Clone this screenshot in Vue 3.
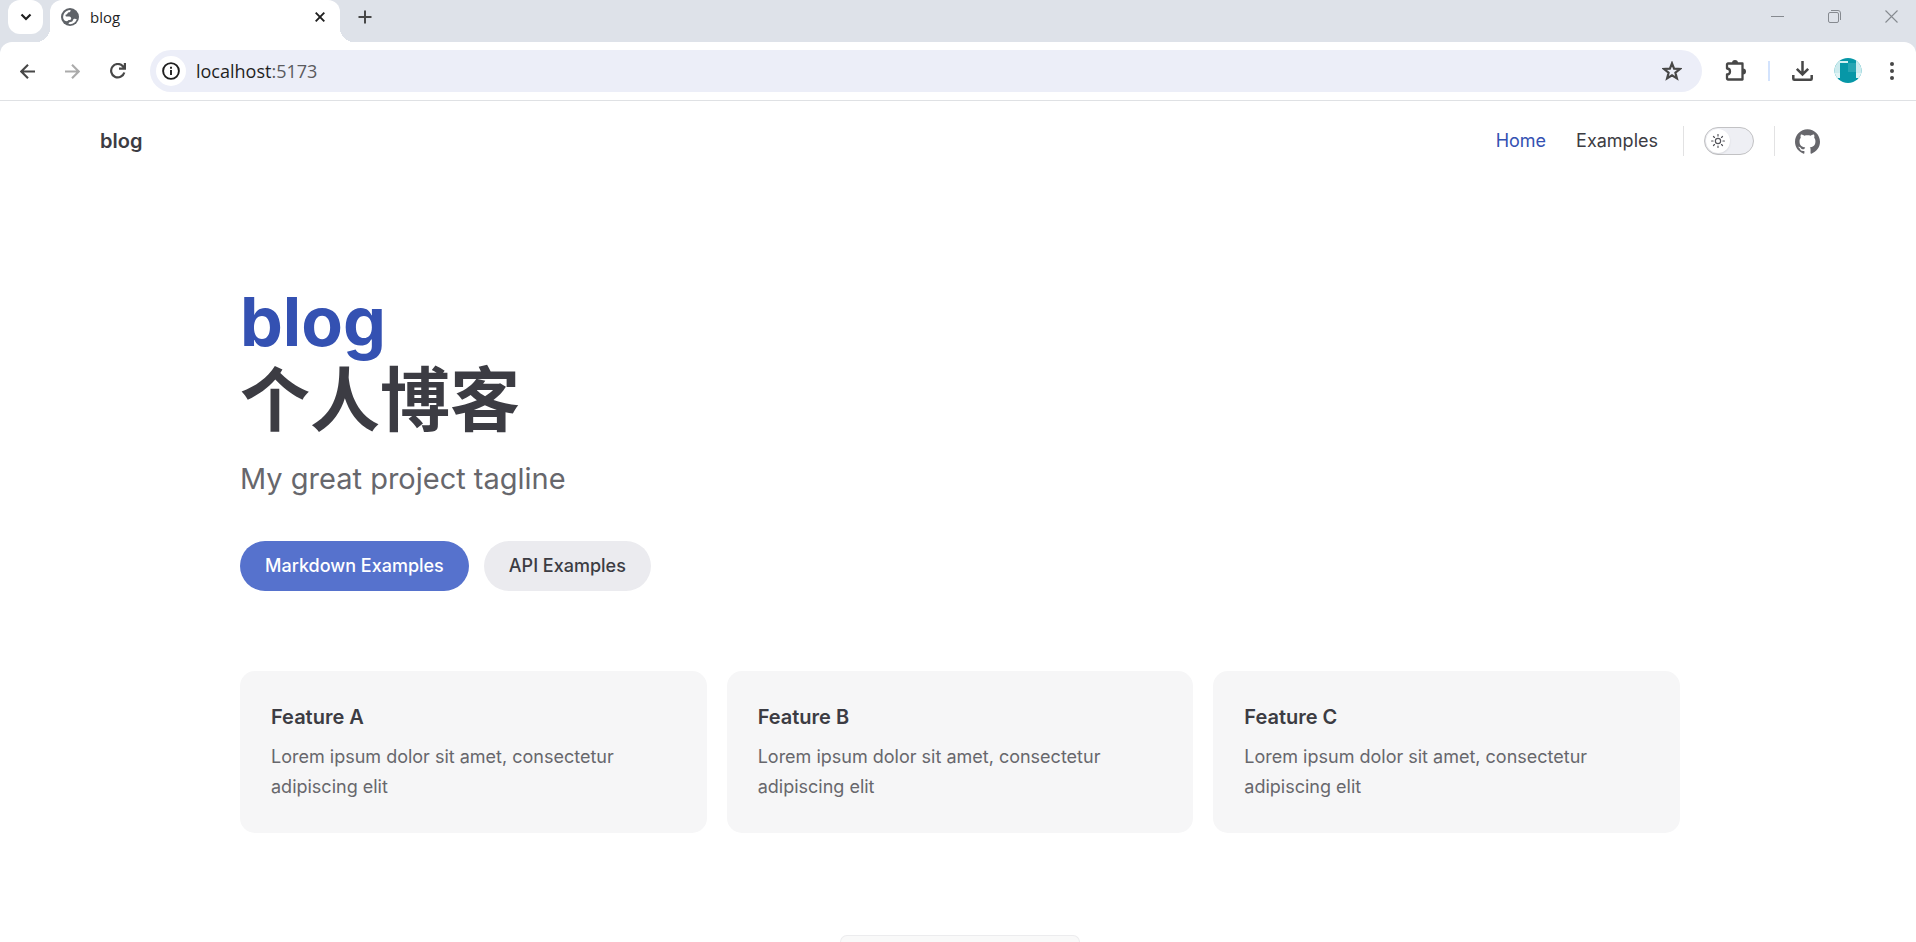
<script setup>
import { ref } from 'vue'

const address = ref('localhost:5173')
const dark = ref(false)
const features = [
  { title: 'Feature A', details: 'Lorem ipsum dolor sit amet, consectetur adipiscing elit' },
  { title: 'Feature B', details: 'Lorem ipsum dolor sit amet, consectetur adipiscing elit' },
  { title: 'Feature C', details: 'Lorem ipsum dolor sit amet, consectetur adipiscing elit' }
]
const rays = [0, 45, 90, 135, 180, 225, 270, 315]
</script>

<template>
  <div class="browser">
    <header class="tabstrip">
      <button class="tab-search" aria-label="Search tabs">
        <svg width="12" height="12" viewBox="0 0 12 12"><path d="M1.500 3.500 6 8l4.500-4.500" fill="none" stroke="#1f1f1f" stroke-width="2.200" /></svg>
      </button>
      <div class="tab">
        <svg width="18" height="18" viewBox="0 0 18 18">
          <circle cx="9" cy="9" r="9" fill="#5f6368" />
          <path d="M9.500 1.900c.3 1.200-.3 2.300-1.600 2.400-1.300.1-1.200 1.500-2 2-.6.4-1.400.2-1.400 1.100 0 1.100 1.200 1.200 2.400 1.200 1.800 0 3.300.3 3.300 1.800 0 1.300-1.100 1.500-2.300 1.600-1.200.1-1 1.200-2.100 1.200-1.300 0-2.600-1-3.300-2.300C1.200 7.500 3.500 1.900 9.500 1.900z" fill="#fff" />
          <path d="M7.600 16c.1-1.200.8-1.800 1.900-1.900 1.500-.1 2.200-.7 2.500-2 .2-1 .9-1.400 1.900-1.400.8 0 1.400.2 1.900.6C14.700 14.600 11.600 16.700 7.600 16z" fill="#fff" />
        </svg>
        <span class="tab-title">blog</span>
        <button class="plain" aria-label="Close tab">
          <svg width="10" height="10" viewBox="0 0 10 10"><path d="M.7.7l8.600 8.600M9.300.7.7 9.300" stroke="#1f1f1f" stroke-width="1.900" /></svg>
        </button>
      </div>
      <button class="plain new-tab" aria-label="New tab">
        <svg width="14" height="14" viewBox="0 0 14 14"><path d="M7 .5v13M.5 7h13" stroke="#474747" stroke-width="2" /></svg>
      </button>
      <div class="window-buttons">
        <button class="plain" aria-label="Minimize"><svg width="13" height="13" viewBox="0 0 13 13"><path d="M0 6.500h13" stroke="#868a90" /></svg></button>
        <button class="plain" aria-label="Restore">
          <svg width="13" height="13" viewBox="0 0 13 13" fill="none" stroke="#868a90"><rect x=".5" y="2.500" width="10" height="10" rx="1.500" /><path d="M3 .5h7a2.500 2.500 0 0 1 2.500 2.500v7" /></svg>
        </button>
        <button class="plain" aria-label="Close window"><svg width="13" height="13" viewBox="0 0 13 13"><path d="m.5.5 12 12M12.500.5l-12 12" stroke="#868a90" stroke-width="1.100" /></svg></button>
      </div>
    </header>

    <div class="toolbar">
      <div class="history">
        <button class="plain" aria-label="Back"><svg width="15" height="15" viewBox="0 0 15 15"><path d="M15 7.500H1.500M8 .8 1.300 7.500 8 14.200" fill="none" stroke="#474747" stroke-width="2.100" /></svg></button>
        <button class="plain" aria-label="Forward"><svg width="15" height="15" viewBox="0 0 15 15"><path d="M0 7.500h13.500M7 .8l6.700 6.700L7 14.200" fill="none" stroke="#ababab" stroke-width="2.100" /></svg></button>
        <button class="plain" aria-label="Reload"><svg width="16" height="16" viewBox="0 0 16 16"><path d="M14.300 9.500A6.700 6.700 0 1 1 12.900 3.300L14.500 5.200M14.900 0v5.700H9" fill="none" stroke="#474747" stroke-width="2.200" /></svg></button>
      </div>
      <div class="omnibox">
        <button class="site-info" aria-label="Site information">
          <svg width="18" height="18" viewBox="0 0 18 18"><circle cx="9" cy="9" r="7.900" fill="none" stroke="#1f1f1f" stroke-width="1.900" /><path d="M9 8v5M9 4.800v1.900" stroke="#1f1f1f" stroke-width="1.900" /></svg>
        </button>
        <label class="address">
          <span>localhost</span><span class="port">:5173</span>
          <input v-model="address" aria-label="Address">
        </label>
        <button class="plain" aria-label="Bookmark this page">
          <svg width="20" height="20" viewBox="0 0 20 20"><path d="m10 2.300 2.100 5.300 5.800.4-4.500 3.700 1.500 5.700-4.900-3.100-4.900 3.100 1.500-5.700L2.100 8l5.800-.4z" fill="none" stroke="#474747" stroke-width="2.200" /></svg>
        </button>
      </div>
      <button class="plain extensions" aria-label="Extensions">
        <svg width="22" height="22" viewBox="0 0 22 22">
          <path d="M3 3.500h14.500v16H3a1 1 0 0 1-1-1v-4c4 0 4-6 0-6v-4a1 1 0 0 1 1-1z" fill="none" stroke="#474747" stroke-width="2.300" stroke-linejoin="round" />
          <path d="M7 3a3 3 0 0 1 6 0zM18 8.500a3 3 0 0 1 0 6z" fill="#474747" />
        </svg>
      </button>
      <span class="toolbar-divider"></span>
      <button class="plain" aria-label="Downloads">
        <svg width="21" height="20" viewBox="0 0 21 20"><path d="M10.500 0v13M4.800 7.800l5.700 5.700 5.700-5.700M1.300 14v3.700a1 1 0 0 0 1 1h16.400a1 1 0 0 0 1-1V14" fill="none" stroke="#474747" stroke-width="2.500" /></svg>
      </button>
      <button class="plain profile" aria-label="Profile">
        <svg width="28" height="28" viewBox="0 0 28 28">
          <defs><clipPath id="face"><ellipse cx="14" cy="13.500" rx="13.500" ry="12.500" /></clipPath></defs>
          <g clip-path="url(#face)">
            <path fill="#0797a7" d="M0 0h28v28H0z" /><path fill="#cdebee" d="M0 4h6v12H0zM22 4h6v12h-6z" /><path fill="#e0f4f5" d="M0 16h6v5H0zM22 16h6v5h-6z" /><path fill="#26a5b3" d="M14 6h8v9h-8z" /><path fill="#d3eff1" d="M6 4h8v2H6z" />
          </g>
        </svg>
      </button>
      <button class="plain" aria-label="Menu">
        <svg width="4" height="18" viewBox="0 0 4 18" fill="#474747"><circle cx="2" cy="2" r="2" /><circle cx="2" cy="9" r="2" /><circle cx="2" cy="16" r="2" /></svg>
      </button>
    </div>

    <div class="page">
      <nav class="nav">
        <a class="site-title" href="#">blog</a>
        <div class="links">
          <a class="active" href="#">Home</a>
          <a href="#examples">Examples</a>
        </div>
        <span class="divider"></span>
        <button class="switch" role="switch" :aria-checked="dark" aria-label="Dark mode" @click="dark = !dark">
          <span class="knob">
            <svg width="14" height="14" viewBox="0 0 24 24" fill="none" stroke="#55555b" stroke-width="2" stroke-linecap="round">
              <circle cx="12" cy="12" r="4.500" />
              <path v-for="angle in rays" :key="angle" d="M12 1v2.500" :transform="`rotate(${angle} 12 12)`" />
            </svg>
          </span>
        </button>
        <span class="divider"></span>
        <a href="#github" aria-label="GitHub">
          <svg width="25" height="25" viewBox="0 0 24 24" fill="#67676c"><path d="M12 .297c-6.630 0-12 5.373-12 12 0 5.303 3.438 9.800 8.205 11.385.6.113.82-.258.82-.577 0-.285-.01-1.040-.015-2.040-3.338.724-4.042-1.610-4.042-1.610C4.422 18.070 3.633 17.700 3.633 17.700c-1.087-.744.084-.729.084-.729 1.205.084 1.838 1.236 1.838 1.236 1.070 1.835 2.809 1.305 3.495.998.108-.776.417-1.305.76-1.605-2.665-.3-5.466-1.332-5.466-5.930 0-1.310.465-2.380 1.235-3.220-.135-.303-.54-1.523.105-3.176 0 0 1.005-.322 3.300 1.230.96-.267 1.980-.399 3-.405 1.020.006 2.040.138 3 .405 2.280-1.552 3.285-1.230 3.285-1.230.645 1.653.24 2.873.12 3.176.765.84 1.230 1.910 1.230 3.220 0 4.610-2.805 5.625-5.475 5.920.42.36.81 1.096.81 2.220 0 1.606-.015 2.896-.015 3.286 0 .315.21.69.825.57C20.565 22.092 24 17.592 24 12.297c0-6.627-5.373-12-12-12" /></svg>
        </a>
      </nav>

      <main>
        <section class="hero">
          <h1><span class="name">blog</span><span>个人博客</span></h1>
          <p class="tagline">My great project tagline</p>
          <div class="actions">
            <a class="brand" href="#markdown">Markdown Examples</a>
            <a class="alt" href="#api">API Examples</a>
          </div>
        </section>
        <section class="features">
          <article v-for="feature in features" :key="feature.title">
            <h2>{{ feature.title }}</h2>
            <p>{{ feature.details }}</p>
          </article>
        </section>
        <div class="panel"></div>
      </main>
    </div>
  </div>
</template>

<style>
body { background: #fff; }
</style>

<style scoped>
* { box-sizing: border-box; margin: 0; }
svg { display: block; flex: none; }
a { color: inherit; text-decoration: none; }
.browser {
  min-height: 100vh;
  display: flex;
  flex-direction: column;
  font-family: Inter, "Noto Sans CJK SC", sans-serif;
  color: #3c3c43;
  background: #dee2e9;
}
.plain { border: 0; padding: 0; background: none; display: flex; align-items: center; justify-content: center; }

.tabstrip { display: flex; height: 42px; padding-left: 8px; }
.tab-search { width: 35px; height: 34px; border: 0; border-radius: 12px; background: #fff; display: flex; align-items: center; justify-content: center; padding: 0; }
.tab {
  position: relative;
  width: 290px;
  margin-left: 7px;
  padding: 0 15px 14px 11px;
  display: flex;
  align-items: center;
  gap: 11px;
  background: #fff;
  border-radius: 12px 12px 0 0;
}
.tab::before, .tab::after { content: ""; position: absolute; bottom: 0; width: 14px; height: 14px; }
.tab::before { right: 100%; background: radial-gradient(circle at 0 0, transparent 14px, #fff 14px); }
.tab::after { left: 100%; background: radial-gradient(circle at 100% 0, transparent 14px, #fff 14px); }
.tab svg { margin-top: 6px; }
.tab-title { flex: 1; font: 15px/20px "Open Sans", sans-serif; color: #1f1f1f; padding-top: 6px; }
.new-tab { margin-left: 18px; height: 34px; }
.window-buttons { margin-left: auto; padding-right: 18px; display: flex; gap: 44px; height: 33px; align-items: center; }

.toolbar {
  display: flex;
  align-items: center;
  height: 59px;
  padding: 0 22px 0 20px;
  background: #fff;
  border-bottom: 1px solid #dfe1e4;
  border-radius: 12px 12px 0 0;
}
.history { display: flex; gap: 30px; align-items: center; margin-right: 24px; }
.omnibox { flex: 1; height: 42px; border-radius: 21px; background: #eceef8; display: flex; align-items: center; padding: 0 20px 0 6px; }
.site-info { width: 30px; height: 30px; border: 0; padding: 0; border-radius: 50%; background: #fff; display: flex; align-items: center; justify-content: center; }
.address { position: relative; flex: 1; margin-left: 10px; font: 18px/24px "Open Sans", sans-serif; color: #1f1f1f; display: flex; }
.address input { position: absolute; inset: 0; width: 100%; border: 0; padding: 0; outline: 0; background: none; font: inherit; color: transparent; }
.port { color: #5a5a5e; }
.extensions { margin-left: 23px; }
.toolbar-divider { width: 2px; height: 20px; background: #d3e3fd; margin: 0 22px 0 21px; }
.profile { margin: 0 28px 0 21px; }

.page { flex: 1; background: #fff; }
.nav { display: flex; align-items: center; height: 80px; padding: 0 96px 0 100px; }
.site-title { font-size: 20px; line-height: 30px; font-weight: 600; margin-right: auto; }
.links { display: flex; gap: 30px; font-size: 18px; line-height: 30px; font-weight: 400; }
.active { color: #3451b2; }
.divider { width: 1px; height: 30px; background: #e2e2e3; margin: 0 20px; }
.links + .divider { margin-left: 25px; }
.switch { width: 50px; height: 28px; border: 1px solid #c2c2c4; border-radius: 14px; background: #eeeff4; padding: 0 1px; display: flex; align-items: center; }
.knob { width: 24px; height: 24px; border-radius: 50%; background: #fff; box-shadow: 0 1px 2px rgba(0, 0, 0, .1); display: flex; align-items: center; justify-content: center; }

main { padding: 0 236px 0 240px; }
.hero { padding: 100px 0 80px; }
.hero h1 { font-size: 70px; line-height: 80px; font-weight: 700; }
.hero h1 span { display: block; width: fit-content; }
.hero .name { color: #3451b2; font-size: 68px; }
.tagline { padding-top: 15px; font-size: 29px; line-height: 45px; font-weight: 400; color: #67676c; }
.actions { display: flex; gap: 15px; padding-top: 40px; font-size: 18px; line-height: 50px; font-weight: 500; }
.actions a { border-radius: 25px; padding: 0 25px; }
.brand { color: #fff; background: #5672cd; }
.alt { background: #ebebef; }
.features { display: grid; grid-template-columns: repeat(3, 1fr); gap: 20px; }
.features article { padding: 31px; border-radius: 15px; background: #f6f6f7; }
.features h2 { font-size: 20px; line-height: 30px; font-weight: 600; }
.features p { padding-top: 10px; font-size: 18px; line-height: 30px; font-weight: 400; color: #67676c; }
.panel { width: 240px; height: 7px; margin: 102px auto 0; border: 1px solid #ececee; border-bottom: 0; border-radius: 10px 10px 0 0; background: #f9f9f9; }
</style>
